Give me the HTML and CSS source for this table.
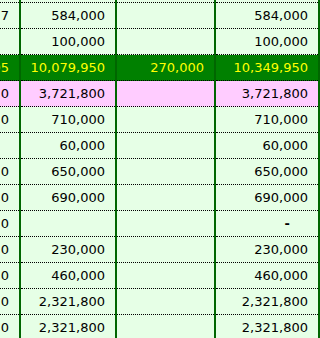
FILE: index.html
```
<!DOCTYPE html>
<html>
<head>
<meta charset="utf-8">
<link rel="stylesheet" href="styles.css">
</head>
<body>
<div class="sheet">
<table class="grid">
<colgroup>
<col class="c1"><col class="c2"><col class="c3"><col class="c4">
</colgroup>
<tbody>
<tr><td></td><td></td><td></td><td></td></tr>
<tr><td>7</td><td>584,000</td><td></td><td>584,000</td></tr>
<tr><td></td><td>100,000</td><td></td><td>100,000</td></tr>
<tr class="total"><td>9,809,995</td><td>10,079,950</td><td>270,000</td><td>10,349,950</td></tr>
<tr class="pink"><td>0</td><td>3,721,800</td><td></td><td>3,721,800</td></tr>
<tr><td>0</td><td>710,000</td><td></td><td>710,000</td></tr>
<tr><td></td><td>60,000</td><td></td><td>60,000</td></tr>
<tr><td>0</td><td>650,000</td><td></td><td>650,000</td></tr>
<tr><td>0</td><td>690,000</td><td></td><td>690,000</td></tr>
<tr><td>0</td><td></td><td></td><td><span class="dash">-</span></td></tr>
<tr><td>0</td><td>230,000</td><td></td><td>230,000</td></tr>
<tr><td>0</td><td>460,000</td><td></td><td>460,000</td></tr>
<tr><td>0</td><td>2,321,800</td><td></td><td>2,321,800</td></tr>
<tr><td>0</td><td>2,321,800</td><td></td><td>2,321,800</td></tr>
</tbody>
</table>
</div>
</body>
</html>
```
FILE: styles.css
```
html, body {
  margin: 0;
  padding: 0;
  background: #e6ffe6;
}
.sheet {
  width: 320px;
  height: 338px;
  overflow: hidden;
}
.grid {
  border-collapse: collapse;
  table-layout: fixed;
  width: 379px;
  margin-left: -60px;
  margin-top: -23px;
  font-family: "DejaVu Sans", Verdana, sans-serif;
  font-size: 13px;
  color: #000;
}
.c1 { width: 80px; }
.c2 { width: 96px; }
.c3 { width: 99px; }
.c4 { width: 104px; }
.grid td {
  height: 25px;
  padding: 0 10px 0 0;
  text-align: right;
  vertical-align: middle;
  white-space: nowrap;
  border-bottom: 1px dotted #000;
  border-right: 2px solid #006600;
  background: #e6ffe6;
  line-height: 14px;
}
.grid tr.total td {
  background: #008000;
  color: #ffff00;
}
.grid tr.pink td {
  background: #ffccff;
}
.dash {
  display: inline-block;
  margin-right: 18px;
  font-weight: bold;
}
```
